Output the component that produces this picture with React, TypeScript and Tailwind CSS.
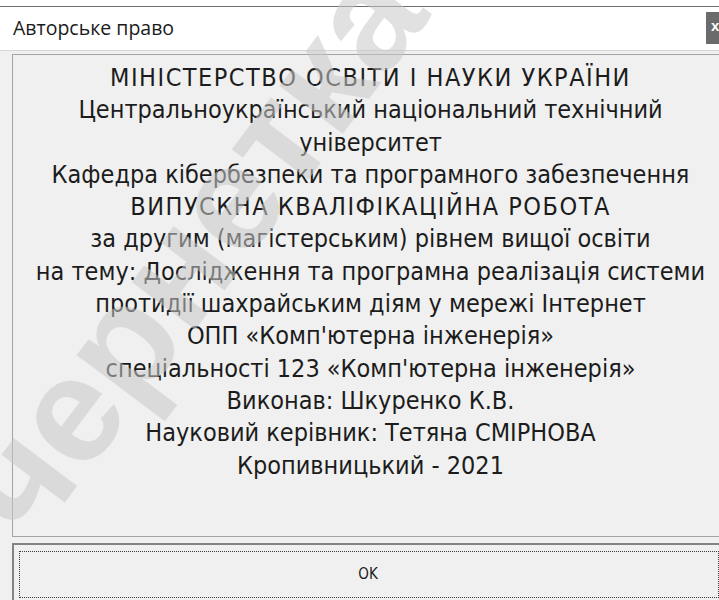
import React from 'react'

// caps lines get a little extra tracking, the rest stay as typed
const lines: { text: string; caps?: boolean }[] = [
  { text: 'МІНІСТЕРСТВО ОСВІТИ І НАУКИ УКРАЇНИ', caps: true },
  { text: 'Центральноукраїнський національний технічний' },
  { text: 'університет' },
  { text: 'Кафедра кібербезпеки та програмного забезпечення' },
  { text: 'ВИПУСКНА КВАЛІФІКАЦІЙНА РОБОТА', caps: true },
  { text: 'за другим (магістерським) рівнем вищої освіти' },
  { text: 'на тему: Дослідження та програмна реалізація системи' },
  { text: 'протидії шахрайським діям у мережі Інтернет' },
  { text: 'ОПП «Комп\'ютерна інженерія»' },
  { text: 'спеціальності 123 «Комп\'ютерна інженерія»' },
  { text: 'Виконав: Шкуренко К.В.' },
  { text: 'Науковий керівник: Тетяна СМІРНОВА' },
  { text: 'Кропивницький - 2021' },
]

const App = () => {
  return (
    <div className="relative w-[719px] h-[600px] overflow-hidden bg-white flex flex-col">
      {/* window top edge */}
      <div className="h-[6px] shrink-0 bg-white border-b border-[#6e6e6e] box-content" />

      {/* title bar */}
      <div className="h-[44px] shrink-0 flex items-start bg-white border-b border-[#d6d6d6]">
        <span className="pl-[13px] pt-[8px] text-[19.5px] leading-[26px] text-[#1b1b1b] font-['Open_Sans',sans-serif]">
          Авторське право
        </span>
        <div className="ml-auto mt-[5px] w-[13px] h-[32px] bg-[#6b6b6b] overflow-hidden">
          <span className="block pl-[5px] pt-[4px] text-[15px] leading-[20px] font-bold text-white font-['Liberation_Sans',sans-serif]">
            x
          </span>
        </div>
      </div>

      {/* dialog body */}
      <div className="flex-1 bg-[#f0f0f0] pl-[12px] pt-[3px] flex flex-col">
        <div className="w-[716px] h-[483px] shrink-0 border border-[#a3a3a3] border-r-0 flex flex-col items-center pt-[7px] text-[#1c1c1c] text-[25px] leading-[32.3px] font-['DejaVu_Sans_Condensed','DejaVu_Sans',sans-serif]">
          {lines.map((line) => (
            <div
              key={line.text}
              className={line.caps ? 'whitespace-nowrap text-center tracking-[1.5px]' : 'whitespace-nowrap text-center'}
            >
              {line.text}
            </div>
          ))}
        </div>

        <button className="mt-[6px] w-[716px] h-[60px] shrink-0 border-t-2 border-l-2 border-[#838383] bg-[#f0f0f0] p-[5px] text-left">
          <div className="w-[700px] h-[47px] border border-dotted border-[#3c3c3c] flex items-center justify-center">
            <span className="-ml-[2px] text-[15px] text-[#1c1c1c] font-['DejaVu_Sans_Condensed','DejaVu_Sans',sans-serif]">
              OK
            </span>
          </div>
        </button>
      </div>

      {/* watermark */}
      <div className="pointer-events-none absolute left-[190px] top-[250px] -translate-x-1/2 -translate-y-1/2 -rotate-[53deg] whitespace-nowrap text-[150px] leading-none font-bold text-[rgba(200,200,200,0.55)] font-['Liberation_Sans',sans-serif]">
        чернетка
      </div>
    </div>
  )
}

export default App
